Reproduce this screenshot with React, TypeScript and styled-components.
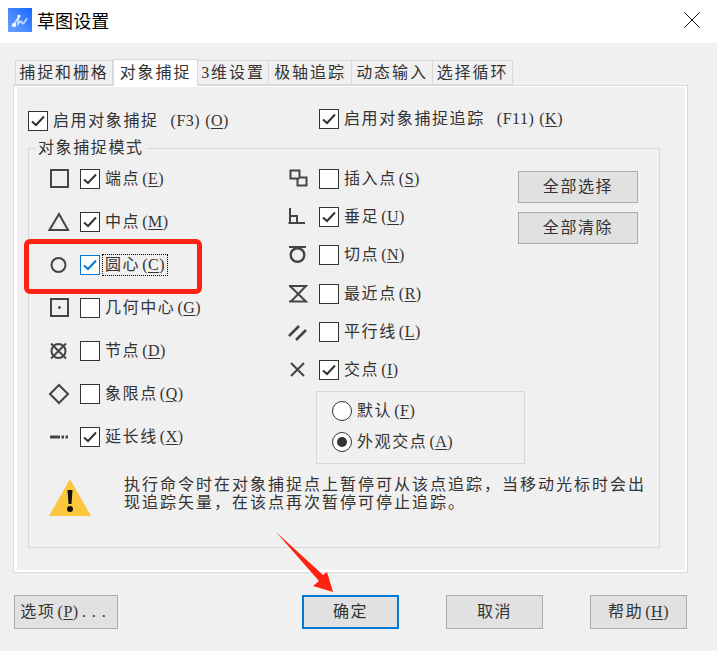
import React from "react";
import styled, { createGlobalStyle } from "styled-components";

const Global = createGlobalStyle`
  html, body { margin: 0; padding: 0; background: #f0f0f0; }
  * { box-sizing: border-box; }
`;

const Dialog = styled.div`
  position: relative;
  width: 717px;
  height: 651px;
  overflow: hidden;
  background: #f0f0f0;
  color: #333;
  font-family: "Liberation Serif", "Noto Sans CJK SC", serif;
  font-size: 16px;
  line-height: 20px;
  letter-spacing: 1.6px;
`;

const TitleBar = styled.header`
  display: flex;
  align-items: center;
  height: 43px;
  padding: 0 17px 0 8px;
  background: #fff;
`;

const AppIcon = styled.svg`
  width: 24px;
  height: 24px;
  margin-top: -3px;
  flex: none;
`;

const Title = styled.h1`
  flex: 1;
  margin: -3px 0 0 5px;
  font: 400 18px/24px "Noto Sans CJK SC", sans-serif;
  letter-spacing: 0.1px;
  color: #000;
`;

const CloseIcon = styled.svg`
  width: 16px;
  height: 16px;
  margin-top: -3px;
`;

const Body = styled.div`
  padding: 16px 29px 0 13px;
`;

const TabList = styled.div`
  position: relative;
  z-index: 1;
  display: flex;
  align-items: flex-start;
  height: 27px;
  margin: 0 0 -1px 2px;
  letter-spacing: 1.9px;
`;

const Tab = styled.div<{ $width: number; $active?: boolean }>`
  width: ${(p) => p.$width}px;
  height: ${(p) => (p.$active ? 27 : 25)}px;
  margin-top: ${(p) => (p.$active ? 0 : 1)}px;
  display: flex;
  align-items: center;
  justify-content: center;
  background: ${(p) => (p.$active ? "#fff" : "#f0f0f0")};
  border: 1px solid #d9d9d9;
  border-bottom-width: ${(p) => (p.$active ? 0 : 1)}px;
  border-left-width: ${(p) => (p.$active ? 1 : 0)}px;
  white-space: nowrap;
  &:first-child { border-left-width: 1px; }
`;

const Panel = styled.div`
  height: 488px;
  border: 1px solid #d9d9d9;
  background: #f0f0f0;
`;

const PanelInner = styled.div`
  height: 100%;
  padding: 24px 25px 0 11px;
  border-style: solid;
  border-color: #fff;
  border-width: 1px 2px 2px 3px;
`;

const TopOptions = styled.div`
  display: grid;
  grid-template-columns: 291px 1fr;
  align-items: start;
  height: 29px;
`;

const Option = styled.label<{ $raise?: number }>`
  display: flex;
  align-items: center;
  gap: 5px;
  height: 20px;
  margin-top: ${(p) => -(p.$raise ?? 0)}px;
  white-space: nowrap;
`;

const Box = styled.span<{ $focus?: boolean }>`
  width: 20px;
  height: 20px;
  flex: none;
  display: flex;
  align-items: center;
  justify-content: center;
  background: #fff;
  border: 1px solid ${(p) => (p.$focus ? "#0078d7" : "#333")};
`;

const Tick = styled.svg`
  width: 14px;
  height: 12px;
`;

const Hot = styled.span<{ $gap?: number }>`
  margin-left: ${(p) => p.$gap ?? 2}px;
  letter-spacing: 0.5px;
  & u { text-underline-offset: 2px; }
`;

const FocusLabel = styled.span`
  outline: 1px dotted #000;
  padding: 0 2px;
  margin-left: -2px;
`;

const Group = styled.fieldset`
  height: 410px;
  margin: -2px 0 0;
  padding: 11px 0 0;
  border: 1px solid #d9d9d9;
  min-width: 0;
`;

const Legend = styled.legend`
  margin-left: 7px;
  padding: 0 2px;
  height: 20px;
  line-height: 19px;
`;

const Modes = styled.div`
  display: grid;
  grid-template-columns: 239px 231px 120px;
  height: 294px;
  padding-left: 19px;
`;

const ModeColumn = styled.div<{ $gap: number }>`
  display: flex;
  flex-direction: column;
  gap: ${(p) => p.$gap}px;
`;

const ModeRow = styled.div`
  display: flex;
  align-items: center;
  gap: 10px;
  height: 20px;
`;

const Symbol = styled.svg`
  width: 22px;
  height: 22px;
  flex: none;
  fill: none;
  stroke: #444;
  stroke-width: 2;
`;

const IntersectionBox = styled.div`
  display: flex;
  flex-direction: column;
  gap: 11px;
  width: 209px;
  height: 73px;
  margin: -7.2px 0 0 29px;
  padding: 9px 0 0 15px;
  border: 1px solid #d9d9d9;
`;

const RadioLabel = styled.label`
  display: flex;
  align-items: center;
  gap: 5px;
  height: 20px;
  white-space: nowrap;
`;

const Radio = styled.span<{ $on?: boolean }>`
  width: 20px;
  height: 20px;
  flex: none;
  display: flex;
  align-items: center;
  justify-content: center;
  border-radius: 50%;
  border: 1px solid #333;
  background: #fff;
  &::after {
    content: "";
    display: ${(p) => (p.$on ? "block" : "none")};
    width: 10px;
    height: 10px;
    border-radius: 50%;
    background: #333;
  }
`;

const SideButtons = styled.div`
  display: flex;
  flex-direction: column;
  gap: 9px;
  padding-top: 2px;
`;

const Button = styled.button<{ $width?: number; $height?: number; $primary?: boolean }>`
  width: ${(p) => (p.$width ? `${p.$width}px` : "100%")};
  height: ${(p) => p.$height ?? 32}px;
  padding: 0;
  background: #e1e1e1;
  border: ${(p) => (p.$primary ? "2px solid #0078d7" : "1px solid #adadad")};
  color: inherit;
  font: inherit;
  letter-spacing: inherit;
  white-space: nowrap;
`;

const Dots = styled.span`
  letter-spacing: 6px;
  margin-left: 3px;
`;

const Notice = styled.div`
  display: flex;
  align-items: flex-start;
  gap: 33px;
  margin: 13px 0 0 20px;
`;

const WarnIcon = styled.svg`
  width: 42px;
  height: 38px;
  flex: none;
  margin-top: 3px;
`;

const NoticeText = styled.p`
  width: 526px;
  margin: 0;
  line-height: 17.5px;
  letter-spacing: 2px;
`;

const Footer = styled.div`
  display: grid;
  grid-template-columns: 288px 144px 144px 97px;
  align-items: center;
  margin: 22px 0 0 1px;
  width: 673px;
`;

const Highlight = styled.div`
  position: absolute;
  left: 24px;
  top: 239px;
  width: 178px;
  height: 55px;
  border: 5px solid #ff2111;
  border-radius: 6px;
  pointer-events: none;
`;

const Arrow = styled.svg`
  position: absolute;
  left: 270px;
  top: 528px;
  width: 70px;
  height: 70px;
  pointer-events: none;
`;

const Check = ({ on, focus }: { on?: boolean; focus?: boolean }) => (
  <Box $focus={focus}>
    {on && (
      <Tick viewBox="0 0 14 12" fill="none" stroke={focus ? "#0078d7" : "#333"} strokeWidth="2">
        <path d="M1 6.5 L5 10 L13 1.5" />
      </Tick>
    )}
  </Box>
);

const icons: Record<string, React.ReactNode> = {
  end: <rect x="3" y="2" width="17" height="17" />,
  mid: <path d="M11 3 L20 19 H1.5 Z" />,
  center: <circle cx="10.5" cy="11" r="7" />,
  geo: (
    <>
      <rect x="3" y="2" width="17" height="17" />
      <circle cx="11.5" cy="10.5" r="1" fill="#333" strokeWidth="1" />
    </>
  ),
  node: (
    <>
      <circle cx="10.5" cy="11" r="7" />
      <path d="M3 3.5 L18 18.5 M18 3.5 L3 18.5" />
    </>
  ),
  quad: <path d="M11 2 L20 11 L11 20 L2 11 Z" />,
  ext: <path d="M2 11 H12 M13.5 11 H16 M17.5 11 H20" strokeWidth="3" />,
  ins: <path d="M3.5 2.5 H12.5 V9.5 H19.5 V17.5 H10.5 V10.5 H3.5 Z M10.5 10.5 H12.5" />,
  perp: <path d="M3 2 V17 M1.5 17 H18 M3 10 H10 V17" />,
  tan: (
    <>
      <path d="M2 3 H19" />
      <circle cx="10.5" cy="11" r="6.8" strokeWidth="2.4" />
    </>
  ),
  near: <path d="M2 3 H19 L4 18.5 H2 H19 L3 3" />,
  par: <path d="M2 15 L12 5 M9 19 L19 9" strokeWidth="2.6" />,
  cross: <path d="M4 4 L17 17 M17 4 L4 17" />,
};

const Mode = ({ icon, on, children }: { icon: string; on?: boolean; children: React.ReactNode }) => (
  <ModeRow>
    <Symbol viewBox="0 0 22 22">{icons[icon]}</Symbol>
    <Option>
      <Check on={on} />
      <span>{children}</span>
    </Option>
  </ModeRow>
);

const K = ({ k, gap }: { k: string; gap?: number }) => (
  <Hot $gap={gap}>
    (<u>{k}</u>)
  </Hot>
);

export default function App() {
  return (
    <Dialog>
      <Global />
      <TitleBar>
        <AppIcon viewBox="0 0 24 24">
          <defs>
            <linearGradient id="app" x1="1" y1="0" x2="0" y2="1">
              <stop offset="0" stopColor="#1668ff" />
              <stop offset="1" stopColor="#6ba4ff" />
            </linearGradient>
          </defs>
          <rect width="24" height="24" fill="url(#app)" />
          <path d="M6 17 L11 8 L10 16 Q14 11 14 15 Q15 18 19 10" fill="none" stroke="#fff" strokeWidth="1.6" opacity="0.75" />
          <circle cx="6" cy="17" r="2.2" fill="#fff" opacity="0.9" />
          <circle cx="11" cy="8" r="1.6" fill="#fff" opacity="0.9" />
        </AppIcon>
        <Title>草图设置</Title>
        <CloseIcon viewBox="0 0 16 16" fill="none" stroke="#111" strokeWidth="1">
          <path d="M0.5 0.5 L15.5 15.5 M15.5 0.5 L0.5 15.5" />
        </CloseIcon>
      </TitleBar>
      <Body>
        <TabList>
          <Tab $width={98}>捕捉和栅格</Tab>
          <Tab $width={85} $active>
            对象捕捉
          </Tab>
          <Tab $width={71}>3维设置</Tab>
          <Tab $width={83}>极轴追踪</Tab>
          <Tab $width={81}>动态输入</Tab>
          <Tab $width={80}>选择循环</Tab>
        </TabList>
        <Panel>
          <PanelInner>
            <TopOptions>
              <Option>
                <Check on />
                <span>
                  启用对象捕捉
                  <Hot $gap={12}>(F3)</Hot>
                  <K k="O" gap={5} />
                </span>
              </Option>
              <Option $raise={2}>
                <Check on />
                <span>
                  启用对象捕捉追踪
                  <Hot $gap={12}>(F11)</Hot>
                  <K k="K" gap={5} />
                </span>
              </Option>
            </TopOptions>
            <Group>
              <Legend>对象捕捉模式</Legend>
              <Modes>
                <ModeColumn $gap={23}>
                  <Mode icon="end" on>
                    端点<K k="E" />
                  </Mode>
                  <Mode icon="mid" on>
                    中点<K k="M" />
                  </Mode>
                  <ModeRow>
                    <Symbol viewBox="0 0 22 22">{icons.center}</Symbol>
                    <Option>
                      <Check on focus />
                      <FocusLabel>
                        圆心<K k="C" />
                      </FocusLabel>
                    </Option>
                  </ModeRow>
                  <Mode icon="geo">
                    几何中心<K k="G" />
                  </Mode>
                  <Mode icon="node">
                    节点<K k="D" />
                  </Mode>
                  <Mode icon="quad">
                    象限点<K k="Q" />
                  </Mode>
                  <Mode icon="ext" on>
                    延长线<K k="X" />
                  </Mode>
                </ModeColumn>
                <ModeColumn $gap={18.2}>
                  <Mode icon="ins">
                    插入点<K k="S" />
                  </Mode>
                  <Mode icon="perp" on>
                    垂足<K k="U" />
                  </Mode>
                  <Mode icon="tan">
                    切点<K k="N" />
                  </Mode>
                  <Mode icon="near">
                    最近点<K k="R" />
                  </Mode>
                  <Mode icon="par">
                    平行线<K k="L" />
                  </Mode>
                  <Mode icon="cross" on>
                    交点<K k="I" />
                  </Mode>
                  <IntersectionBox>
                    <RadioLabel>
                      <Radio />
                      <span>
                        默认<K k="F" />
                      </span>
                    </RadioLabel>
                    <RadioLabel>
                      <Radio $on />
                      <span>
                        外观交点<K k="A" />
                      </span>
                    </RadioLabel>
                  </IntersectionBox>
                </ModeColumn>
                <SideButtons>
                  <Button>全部选择</Button>
                  <Button>全部清除</Button>
                </SideButtons>
              </Modes>
              <Notice>
                <WarnIcon viewBox="0 0 42 38">
                  <path d="M21 0 L42 37 H0 Z" fill="#fdc63f" />
                  <path d="M18.5 11 H23.5 L22.5 25 H19.5 Z" fill="#111" />
                  <circle cx="21" cy="30" r="3" fill="#111" />
                </WarnIcon>
                <NoticeText>
                  执行命令时在对象捕捉点上暂停可从该点追踪，当移动光标时会出现追踪矢量，在该点再次暂停可停止追踪。
                </NoticeText>
              </Notice>
            </Group>
          </PanelInner>
        </Panel>
        <Footer>
          <Button $width={104} $height={34}>
            选项<K k="P" />
            <Dots>...</Dots>
          </Button>
          <Button $width={97} $height={34} $primary>
            确定
          </Button>
          <Button $width={97} $height={34}>
            取消
          </Button>
          <Button $width={97} $height={34}>
            帮助<K k="H" />
          </Button>
        </Footer>
      </Body>
      <Highlight />
      <Arrow viewBox="270 528 70 70">
        <path d="M276 532 L323 575 L327 572 L333 592 L313 586 L319 581 Z" fill="#ff2111" />
      </Arrow>
    </Dialog>
  );
}
